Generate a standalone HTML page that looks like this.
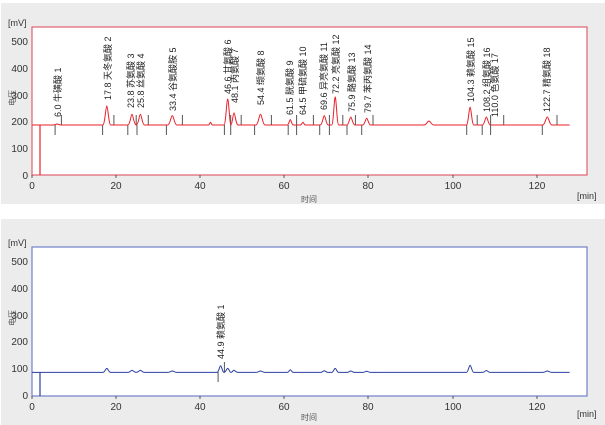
<!DOCTYPE html>
<html><head><meta charset="utf-8"><style>
html,body{margin:0;padding:0;background:#fff;}
svg{display:block;}
text{font-family:"Liberation Sans","Noto Sans CJK SC",sans-serif;}
</style></head><body>
<svg width="605" height="425" viewBox="0 0 605 425" xmlns="http://www.w3.org/2000/svg">
<rect x="1" y="3" width="604" height="201" fill="#ececec"/>
<rect x="1" y="219" width="604" height="206" fill="#ececec"/>
<rect x="32" y="27" width="555" height="148" fill="#fff" stroke="#e06070" stroke-width="1.2"/>
<rect x="32" y="247" width="555" height="149" fill="#fff" stroke="#7080c8" stroke-width="1.2"/>
<g font-size="10" fill="#333" text-anchor="end">
<text x="28" y="45">500</text><text x="28" y="72">400</text><text x="28" y="99">300</text><text x="28" y="125">200</text><text x="28" y="152">100</text><text x="28" y="179">0</text>
<text x="28" y="265">500</text><text x="28" y="292">400</text><text x="28" y="319">300</text><text x="28" y="345">200</text><text x="28" y="372">100</text><text x="28" y="399">0</text>
</g>
<g font-size="9" fill="#333"><text x="8" y="26">[mV]</text><text x="8" y="246">[mV]</text>
<text x="577" y="199">[min]</text><text x="577" y="417">[min]</text></g>
<g font-size="8" fill="#555"><text transform="translate(15,106) rotate(-90)">电压</text><text transform="translate(15,326) rotate(-90)">电压</text>
<text x="301" y="202">时间</text><text x="301" y="420">时间</text></g>
<g font-size="10" fill="#333" text-anchor="middle">
<text x="32" y="189">0</text><text x="116" y="189">20</text><text x="200" y="189">40</text><text x="284" y="189">60</text><text x="368" y="189">80</text><text x="453" y="189">100</text><text x="537" y="189">120</text>
<text x="32" y="410">0</text><text x="116" y="410">20</text><text x="200" y="410">40</text><text x="284" y="410">60</text><text x="368" y="410">80</text><text x="453" y="410">100</text><text x="537" y="410">120</text>
</g>
<g stroke="#333" stroke-width="0.8">
<line x1="32" y1="175" x2="32" y2="178"/><line x1="116" y1="175" x2="116" y2="178"/><line x1="200" y1="175" x2="200" y2="178"/><line x1="284" y1="175" x2="284" y2="178"/><line x1="368" y1="175" x2="368" y2="178"/><line x1="453" y1="175" x2="453" y2="178"/><line x1="537" y1="175" x2="537" y2="178"/>
<line x1="32" y1="396" x2="32" y2="399"/><line x1="116" y1="396" x2="116" y2="399"/><line x1="200" y1="396" x2="200" y2="399"/><line x1="284" y1="396" x2="284" y2="399"/><line x1="368" y1="396" x2="368" y2="399"/><line x1="453" y1="396" x2="453" y2="399"/><line x1="537" y1="396" x2="537" y2="399"/>
</g>
<g stroke="#555" stroke-width="1">
<line x1="55.1" y1="125" x2="55.1" y2="135"/><line x1="61.4" y1="115" x2="61.4" y2="125"/>
<line x1="102.6" y1="125" x2="102.6" y2="135"/><line x1="113.9" y1="115" x2="113.9" y2="125"/>
<line x1="127.8" y1="125" x2="127.8" y2="135"/><line x1="136.2" y1="115" x2="136.2" y2="125"/>
<line x1="137" y1="125" x2="137" y2="135"/><line x1="148.3" y1="115" x2="148.3" y2="125"/>
<line x1="166.4" y1="125" x2="166.4" y2="135"/><line x1="182.4" y1="115" x2="182.4" y2="125"/>
<line x1="224.4" y1="125" x2="224.4" y2="135"/><line x1="230.7" y1="115" x2="230.7" y2="125"/>
<line x1="230.7" y1="125" x2="230.7" y2="135"/><line x1="241.2" y1="115" x2="241.2" y2="125"/>
<line x1="254.6" y1="125" x2="254.6" y2="135"/><line x1="271.4" y1="115" x2="271.4" y2="125"/>
<line x1="288.2" y1="125" x2="288.2" y2="135"/><line x1="296.6" y1="115" x2="296.6" y2="125"/>
<line x1="296.6" y1="125" x2="296.6" y2="135"/><line x1="313.4" y1="115" x2="313.4" y2="125"/>
<line x1="319.7" y1="125" x2="319.7" y2="135"/><line x1="329.4" y1="115" x2="329.4" y2="125"/>
<line x1="329.4" y1="125" x2="329.4" y2="135"/><line x1="342.8" y1="115" x2="342.8" y2="125"/>
<line x1="347" y1="125" x2="347" y2="135"/><line x1="355.4" y1="115" x2="355.4" y2="125"/>
<line x1="361.7" y1="125" x2="361.7" y2="135"/><line x1="373" y1="115" x2="373" y2="125"/>
<line x1="466.7" y1="125" x2="466.7" y2="135"/><line x1="477.2" y1="115" x2="477.2" y2="125"/>
<line x1="482.2" y1="125" x2="482.2" y2="135"/><line x1="490.6" y1="115" x2="490.6" y2="125"/>
<line x1="490.6" y1="125" x2="490.6" y2="135"/><line x1="503.7" y1="115" x2="503.7" y2="125"/>
<line x1="542.3" y1="125" x2="542.3" y2="135"/><line x1="557" y1="115" x2="557" y2="125"/>
<line x1="218.1" y1="372" x2="218.1" y2="382"/><line x1="224.4" y1="362" x2="224.4" y2="372"/>
</g>
<path fill="none" stroke="#e8202a" stroke-width="1" d="M32 125 L53.2 125 C55.2 125 56.2 124 57.2 124 C58.2 124 59.2 125 61.2 125
L102.8 125 C104.8 125 105.8 105.7 106.8 105.7 C107.8 105.7 108.8 125 110.8 125
L128 125 C130 125 131 114.3 132 114.3 C133 114.3 134 125 136.2 125
C138.4 125 139.4 114.3 140.4 114.3 C141.4 114.3 142.4 125 144.4 125
L167.8 125 C170 125 171 115.6 172.3 115.6 C173.6 115.6 174.6 125 176.8 125
L208.5 125 C209.5 125 210 122.3 210.5 122.3 C211 122.3 211.5 125 212.5 125
L224 125 C225.7 125 226.7 99 227.7 99 C228.7 99 229.7 125 231 125 C232.3 125 233 112.9 234 112.9 C235 112.9 236 125 238 125
L256 125 C258.2 125 259.2 114.3 260.5 114.3 C261.8 114.3 262.8 125 265 125
L287.3 125 C288.8 125 289.5 119.6 290.3 119.6 C291.1 119.6 291.8 125 293.3 125
L300.4 125 C301.6 125 302.2 122.3 302.9 122.3 C303.6 122.3 304.2 125 305.4 125
L320.3 125 C322.3 125 323.3 115.6 324.3 115.6 C325.3 115.6 326.3 125 328.3 125
L331.7 125 C333.4 125 334.2 96.9 335.2 96.9 C336.2 96.9 337 125 338.7 125
L346.8 125 C348.8 125 349.8 117 350.8 117 C351.8 117 352.8 125 354.8 125
L362.7 125 C364.7 125 365.7 118.3 366.7 118.3 C367.7 118.3 368.7 125 370.7 125
L424 125 C426.5 125 427.5 121 428.9 121 C430.3 121 431.3 125 434 125
L466.4 125 C468.2 125 469.1 107 470.1 107 C471.1 107 472 125 473.8 125
L482.4 125 C484.4 125 485.4 117 486.4 117 C487.4 117 488.4 125 490.4 125
L542.8 125 C545 125 546 117 547.3 117 C548.6 117 549.6 125 551.8 125 L569.6 125"/>
<path fill="none" stroke="#2a3ea0" stroke-width="1" d="M32 372.4 L102.8 372.4 C104.8 372.4 105.8 368.4 106.8 368.4 C107.8 368.4 108.8 372.4 110.8 372.4
L128 372.4 C130 372.4 131 370.3 132 370.3 C133 370.3 134 372.4 136.2 372.4 C138.4 372.4 139.4 370.3 140.4 370.3 C141.4 370.3 142.4 372.4 144.4 372.4
L167.8 372.4 C170 372.4 171 371 172.3 371 C173.6 371 174.6 372.4 176.8 372.4
L217 372.4 C218.8 372.4 219.6 365.7 220.6 365.7 C221.6 365.7 222.5 372.4 224 372.4 C225.7 372.4 226.7 368.4 227.7 368.4 C228.7 368.4 229.7 372.4 231 372.4 C232.3 372.4 233 370.3 234 370.3 C235 370.3 236 372.4 238 372.4
L256 372.4 C258.2 372.4 259.2 371 260.5 371 C261.8 371 262.8 372.4 265 372.4
L287.3 372.4 C288.8 372.4 289.5 369.7 290.3 369.7 C291.1 369.7 291.8 372.4 293.3 372.4
L320.3 372.4 C322.3 372.4 323.3 370.8 324.3 370.8 C325.3 370.8 326.3 372.4 328.3 372.4
L331.7 372.4 C333.4 372.4 334.2 368.4 335.2 368.4 C336.2 368.4 337 372.4 338.7 372.4
L346.8 372.4 C348.8 372.4 349.8 371 350.8 371 C351.8 371 352.8 372.4 354.8 372.4
L362.7 372.4 C364.7 372.4 365.7 371.3 366.7 371.3 C367.7 371.3 368.7 372.4 370.7 372.4
L466.4 372.4 C468.2 372.4 469.1 365.2 470.1 365.2 C471.1 365.2 472 372.4 473.8 372.4
L482.4 372.4 C484.4 372.4 485.4 370.5 486.4 370.5 C487.4 370.5 488.4 372.4 490.4 372.4
L542.8 372.4 C545 372.4 546 371 547.3 371 C548.6 371 549.6 372.4 551.8 372.4 L569.6 372.4"/>
<line x1="40" y1="125" x2="40" y2="175" stroke="#e8202a" stroke-width="1.2"/>
<line x1="40" y1="372" x2="40" y2="396" stroke="#2a3ea0" stroke-width="1.2"/>
<g font-size="9" fill="#222">
<text transform="translate(61,117) rotate(-90)">6.0 牛磺酸   1</text>
<text transform="translate(111,100) rotate(-90)">17.8 天冬氨酸   2</text>
<text transform="translate(134,108) rotate(-90)">23.8 苏氨酸   3</text>
<text transform="translate(144,108) rotate(-90)">25.8 丝氨酸   4</text>
<text transform="translate(176,111) rotate(-90)">33.4 谷氨酸胺   5</text>
<text transform="translate(231,94) rotate(-90)">46.6 甘氨酸   6</text>
<text transform="translate(238,103) rotate(-90)">48.1 丙氨酸   7</text>
<text transform="translate(264,105) rotate(-90)">54.4 缬氨酸   8</text>
<text transform="translate(293,115) rotate(-90)">61.5 胱氨酸   9</text>
<text transform="translate(306,115) rotate(-90)">64.5 甲硫氨酸   10</text>
<text transform="translate(327,110) rotate(-90)">69.6 异亮氨酸   11</text>
<text transform="translate(339,94) rotate(-90)">72.2 亮氨酸   12</text>
<text transform="translate(355,112) rotate(-90)">75.9 酪氨酸   13</text>
<text transform="translate(371,113) rotate(-90)">79.7 苯丙氨酸   14</text>
<text transform="translate(474,102) rotate(-90)">104.3 赖氨酸   15</text>
<text transform="translate(490,112) rotate(-90)">108.2 组氨酸   16</text>
<text transform="translate(498,117) rotate(-90)">110.0 色氨酸   17</text>
<text transform="translate(550,112) rotate(-90)">122.7 精氨酸   18</text>
<text transform="translate(224,359) rotate(-90)">44.9 赖氨酸   1</text>
</g>
</svg>
</body></html>
